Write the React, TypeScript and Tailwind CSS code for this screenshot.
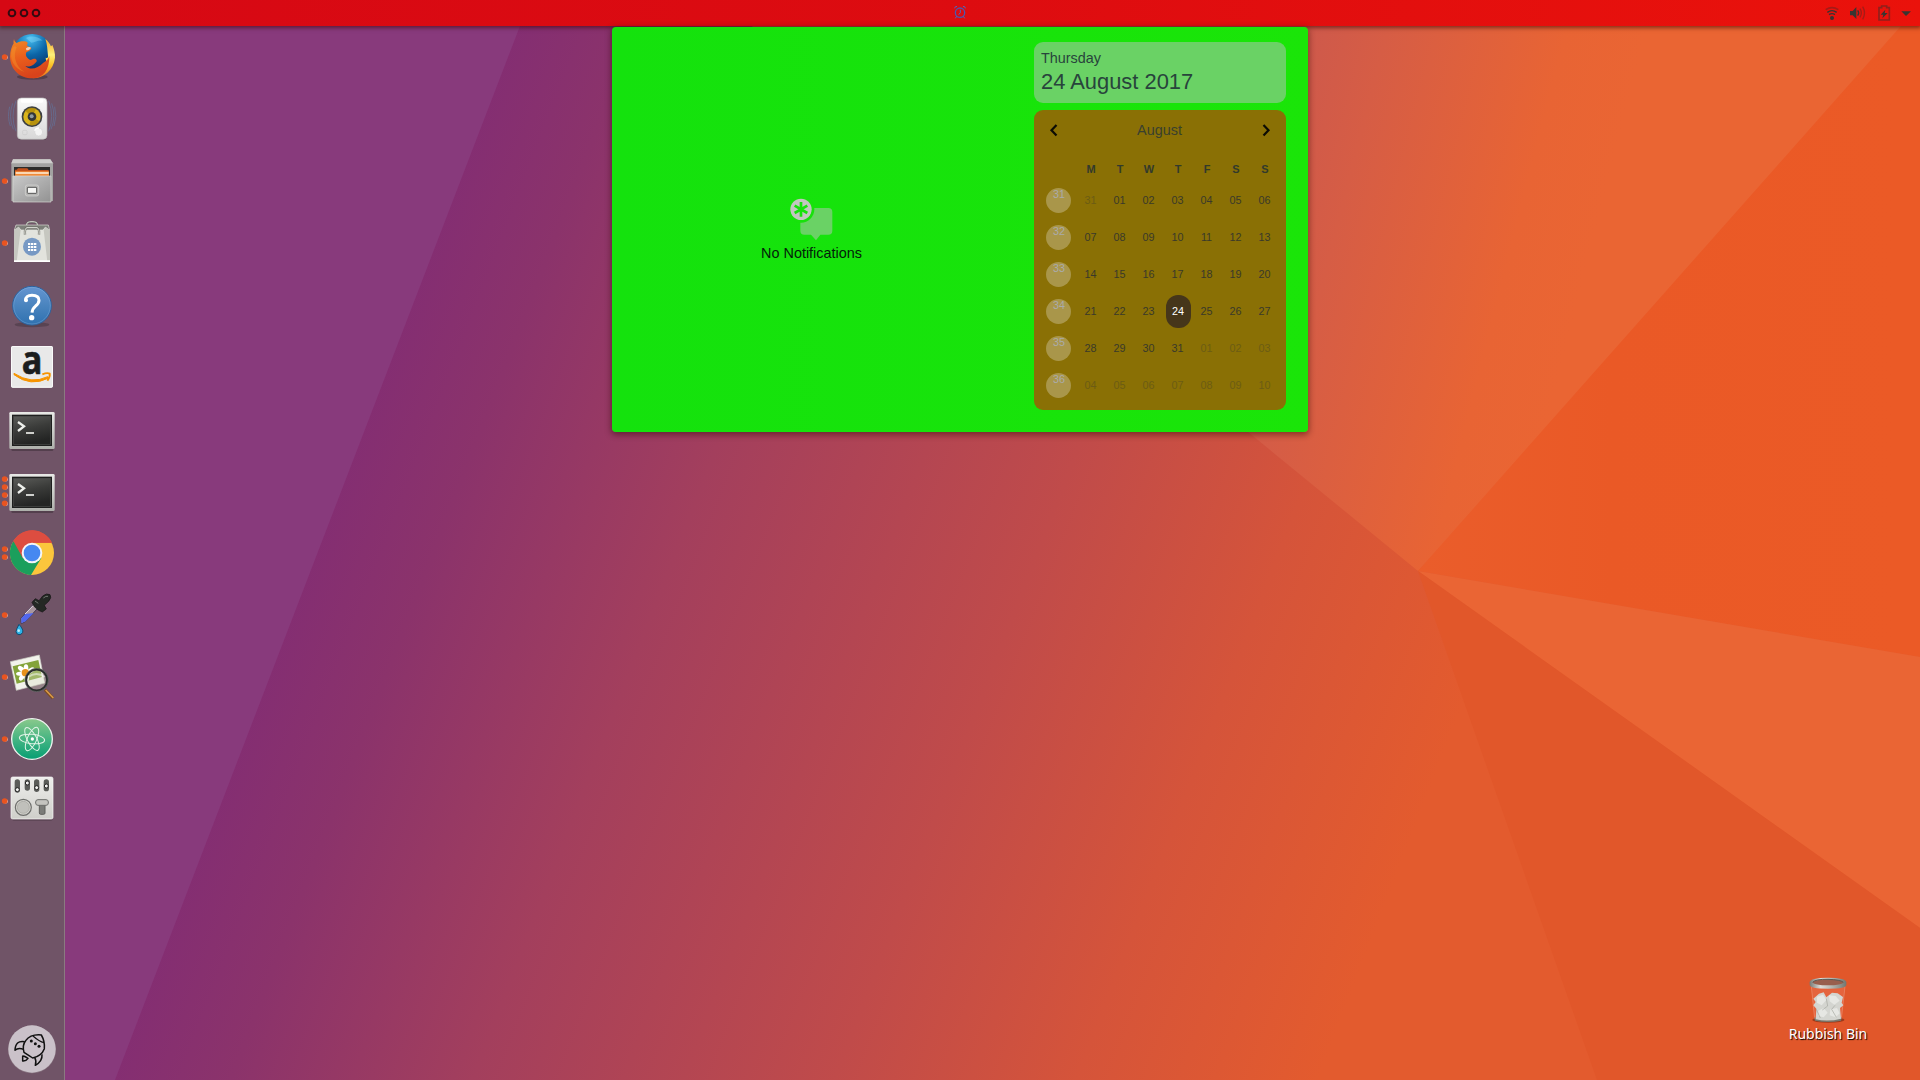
import React from "react";

function Wallpaper() {
  return (
    <svg className="absolute inset-0" width="1920" height="1080" viewBox="0 0 1920 1080">
      <defs>
        <linearGradient id="base" gradientUnits="userSpaceOnUse" x1="318" y1="540" x2="1370" y2="945">
          <stop offset="0" stopColor="#842e72" />
          <stop offset="0.1" stopColor="#8b336b" />
          <stop offset="0.3" stopColor="#a33f5d" />
          <stop offset="0.6" stopColor="#c04b4a" />
          <stop offset="0.8" stopColor="#d5543a" />
          <stop offset="1" stopColor="#e35b2e" />
        </linearGradient>
        <linearGradient id="top" gradientUnits="userSpaceOnUse" x1="1240" y1="60" x2="1615" y2="155">
          <stop offset="0" stopColor="#c85650" />
          <stop offset="0.35" stopColor="#d65d45" />
          <stop offset="0.8" stopColor="#e86434" />
          <stop offset="1" stopColor="#ea6533" />
        </linearGradient>
        <linearGradient id="right" gradientUnits="userSpaceOnUse" x1="1420" y1="400" x2="1900" y2="400">
          <stop offset="0" stopColor="#ea5d2b" />
          <stop offset="0.4" stopColor="#ea5926" />
          <stop offset="1" stopColor="#eb5a26" />
        </linearGradient>
      </defs>
      <rect width="1920" height="1080" fill="url(#base)" />
      <path d="M0 0H530L115 1080H0Z" fill="#883a7c" />
      <path d="M1418 571L720 0H1920V27Z" fill="url(#top)" />
      <path d="M1418 571L1900 27L1920 4V657Z" fill="url(#right)" />
      <path d="M1418 571L1920 657V928Z" fill="#ea6534" />
      <path d="M1418 571L1920 928V1080H1597Z" fill="#e1572a" />
    </svg>
  );
}

const icons: { top: number; dots: number[]; art: React.ReactNode }[] = [
  {
    top: 78,
    dots: [171],
    art: (
      <>
        <defs>
          <radialGradient id="globe" cx="0.45" cy="0.1" r="0.8">
            <stop offset="0" stopColor="#45bdf0" />
            <stop offset="0.5" stopColor="#0c66a8" />
            <stop offset="1" stopColor="#0a2c62" />
          </radialGradient>
          <linearGradient id="fox" x1="0" y1="0" x2="0.3" y2="1">
            <stop offset="0" stopColor="#f08a24" />
            <stop offset="0.5" stopColor="#ea5f1c" />
            <stop offset="1" stopColor="#d8431b" />
          </linearGradient>
          <linearGradient id="flame" x1="0" y1="0" x2="0" y2="1">
            <stop offset="0" stopColor="#f7a52a" />
            <stop offset="0.4" stopColor="#fdf07a" />
            <stop offset="0.65" stopColor="#fbc62a" />
            <stop offset="1" stopColor="#ea651c" />
          </linearGradient>
        </defs>
        <ellipse cx="97" cy="231" rx="46" ry="8" fill="#000" opacity="0.25" />
        <circle cx="97" cy="165" r="63" fill="url(#globe)" />
        <path d="M78 114c16-8 36-4 50 8-16-2-22 6-34 6z" fill="#8fdcf8" opacity="0.4" />
        <path d="M136 117c8 6 14 14 17 22l4-4c5 12 9 26 8 38-4 38-34 62-68 62 34-10 46-34 40-62 5 2 8 0 7-6-2-18-2-34-8-50z" fill="url(#flame)" />
        <path d="M42 117c1 7 4 9 8 12 8-5 18-6 30-4 4 3 4 6 0 10 4 6 10 6 14 8 0 6-6 10-14 13-6 8 0 20 12 24 10-5 16-6 18 1 2 4-4 8-10 13-8 6-18 6-24 4 16 14 36 8 54-10 14-8 16-14 18-20 1 40-18 67-51 67-38 0-66-27-67-65 0-16 5-30 11-40-1-4 0-8 1-13z" fill="url(#fox)" />
        <path d="M50 142c-12 26-4 58 24 74-32-8-48-40-38-68 4-8 8-12 14-6z" fill="#f79b2d" opacity="0.4" />
        <path d="M78 145c6-4 10-5 15-2-2 5-8 8-14 8z" fill="#f3d0b2" />
      </>
    ),
  },
  {
    top: 264,
    dots: [],
    art: (
      <>
        <defs>
          <linearGradient id="box" x1="0" y1="0" x2="0" y2="1">
            <stop offset="0" stopColor="#fafafa" />
            <stop offset="1" stopColor="#d8d8d8" />
          </linearGradient>
        </defs>
        <g fill="none" stroke="#5f7fae" strokeWidth="3" opacity="0.5">
          <path d="M48 302q-18 48 0 92M38 310q-14 40 2 78M29 320q-8 30 2 58" />
          <path d="M146 302q18 48 0 92M155 310q14 40-2 78M164 320q8 30-2 58" />
        </g>
        <rect x="55" y="408" width="84" height="12" rx="6" fill="#000" opacity="0.25" />
        <rect x="52" y="294" width="89" height="124" rx="12" fill="url(#box)" stroke="#b8b8b8" strokeWidth="2" />
        <rect x="62" y="296" width="68" height="12" rx="5" fill="#fff" />
        <circle cx="96" cy="350" r="31" fill="#3d4042" />
        <circle cx="96" cy="350" r="26" fill="#d9b41b" />
        <path d="M96 350L76 332A26 26 0 0 1 108 326ZM96 350L118 364A26 26 0 0 1 88 375Z" fill="#a88308" opacity="0.7" />
        <circle cx="96" cy="350" r="13" fill="#323638" />
        <circle cx="95" cy="349" r="6" fill="#8f9ba2" />
        <rect x="68" y="391" width="13" height="13" rx="3" fill="none" stroke="#cacaca" strokeWidth="2" />
        <circle cx="116" cy="396" r="12" fill="#f4f4f4" stroke="#d4d4d4" strokeWidth="2" />
        <path d="M104 392q4-9 13-8" fill="none" stroke="#fff" strokeWidth="4" />
      </>
    ),
  },
  {
    top: 450,
    dots: [543],
    art: (
      <>
        <defs>
          <linearGradient id="cab" x1="0" y1="0" x2="1" y2="1">
            <stop offset="0" stopColor="#c9c9c9" />
            <stop offset="1" stopColor="#929292" />
          </linearGradient>
        </defs>
        <path d="M39 478H151L159 490V603H34V490Z" fill="#a3a3a1" />
        <path d="M39 478H151L159 490H34Z" fill="#cfcfcd" />
        <path d="M42 501H150V532H42Z" fill="#2c2c2a" />
        <path d="M45 509H50L54 505H82L86 510H146V530H45Z" fill="#c2511c" />
        <path d="M46 514H147V530H46Z" fill="#f08a38" />
        <path d="M47 517H146V521H47Z" fill="#fff0dc" />
        <path d="M39 528H153V606H39Z" fill="url(#cab)" stroke="#d9d9d7" strokeWidth="2" />
        <rect x="76" y="555" width="40" height="33" rx="6" fill="#b7b7b5" stroke="#d7d7d5" strokeWidth="2" />
        <rect x="82" y="562" width="28" height="18" rx="2" fill="#f6f6f4" stroke="#555" strokeWidth="3" />
      </>
    ),
  },
  {
    top: 636,
    dots: [729],
    art: (
      <>
        <path d="M80 682v-8q0-9 16-9t16 9v8" fill="none" stroke="#6a6a66" strokeWidth="6" />
        <path d="M80 680v-7q0-8 16-8t16 8v7" fill="none" stroke="#d9dad4" strokeWidth="3" />
        <path d="M48 675H145L149 690H43Z" fill="#7d7f79" stroke="#dcddd7" strokeWidth="2" />
        <path d="M43 690L56 680 64 690H128L136 680 149 690 150 785H42Z" fill="#e2e3dd" />
        <path d="M43 690L56 680 62 690 50 785H42ZM149 690L136 680 131 690 142 785H150Z" fill="#c6c7c0" />
        <path d="M42 781H150V786H42Z" fill="#fff" />
        <path d="M75 704q-2-19 6-21h30q8 2 6 21" fill="none" stroke="#6f7068" strokeWidth="7" />
        <path d="M75 704q-2-19 6-21h30q8 2 6 21" fill="none" stroke="#e4e5df" strokeWidth="3" />
        <circle cx="96" cy="740" r="27" fill="#7799c4" />
        <path d="M84 729h7v6h-7zM93 729h7v6h-7zM102 729h7v6h-7zM84 738h7v6h-7zM93 738h7v6h-7zM102 738h7v6h-7zM84 747h7v6h-7zM93 747h7v6h-7zM102 747h7v6h-7z" fill="#fff" />
      </>
    ),
  },
  {
    top: 12,
    dots: [],
    art: (
      <>
        <defs>
          <linearGradient id="help" x1="0" y1="0" x2="0" y2="1">
            <stop offset="0" stopColor="#6495d2" />
            <stop offset="0.5" stopColor="#4a84be" />
            <stop offset="1" stopColor="#2f71b0" />
          </linearGradient>
        </defs>
        <ellipse cx="96" cy="164" rx="52" ry="8" fill="#000" opacity="0.2" />
        <circle cx="96" cy="107" r="58" fill="url(#help)" stroke="#2b63a0" strokeWidth="3" />
        <circle cx="96" cy="107" r="55" fill="none" stroke="#8fb6df" strokeWidth="1.500" opacity="0.7" />
        <path d="M77 91Q76 76 96 76Q117 76 117 91Q117 101 106 109Q97 116 96 128" fill="none" stroke="#fff" strokeWidth="9" />
        <circle cx="78" cy="91" r="6" fill="#fff" />
        <circle cx="95" cy="143" r="8" fill="#fff" />
      </>
    ),
  },
  {
    top: 198,
    dots: [],
    art: (
      <>
        <rect x="33" y="228" width="126" height="125" rx="5" fill="#e9e9e9" />
        <rect x="34.500" y="229.500" width="123" height="122" rx="4" fill="none" stroke="#fafafa" strokeWidth="3" />
        <text x="96" y="312" textAnchor="middle" className="font-['Open_Sans'] font-bold" fontSize="116" textLength="62" lengthAdjust="spacingAndGlyphs" fill="#1b1d1e" stroke="#1b1d1e" strokeWidth="2">a</text>
        <path d="M42 310Q94 344 143 320L146 324Q92 352 42 314Z" fill="#f79400" stroke="#f79400" strokeWidth="3" />
        <path d="M127 313Q142 307 149 311Q151 319 142 332" fill="none" stroke="#f79400" strokeWidth="6" />
      </>
    ),
  },
  { top: 384, dots: [], art: <Terminal dy={0} /> },
  { top: 570, dots: [627, 651, 675, 700], art: <Terminal dy={186} /> },
  {
    top: -9,
    dots: [72, 96],
    art: (
      <>
        <circle cx="96" cy="84" r="66" fill="#fbc63c" />
        <path d="M96 84L96 53L156 53A66 66 0 0 0 37 54L69 99Z" fill="#dd4d40" />
        <path d="M37 54A66 66 0 0 0 93 150L124 99L96 84L69 99L42 47Z" fill="#1b9f5c" />
        <path d="M40 48L68 98L96 84V53H156A66 66 0 0 0 40 48Z" fill="#dd4d40" />
        <circle cx="96" cy="84" r="31" fill="#f4f6f8" />
        <circle cx="96" cy="84" r="25" fill="#4688f1" />
      </>
    ),
  },
  {
    top: 177,
    dots: [270],
    art: (
      <>
        <path d="M62 281L100 238L113 250L76 290L64 296Z" fill="#a9969f" stroke="#453b53" strokeWidth="3" />
        <path d="M64 280L76 267L101 264L77 289L64 295Z" fill="#5267ee" />
        <path d="M75 267L99 242" stroke="#e9dce6" strokeWidth="3" />
        <path d="M96 232L106 221L117 227L128 213Q140 203 150 209Q156 217 146 229L133 241L139 252L127 261Q105 254 96 232Z" fill="#242824" stroke="#111" strokeWidth="2" />
        <path d="M130 219q8-7 14-5M105 228l10 7" stroke="#71766f" strokeWidth="3" fill="none" />
        <path d="M57 298Q71 314 68 322Q64 330 57 329Q49 328 48 320Q49 312 57 298Z" fill="#2fb3e8" stroke="#124d72" strokeWidth="3" />
        <circle cx="56" cy="317" r="4" fill="#bdeefb" />
      </>
    ),
  },
  {
    top: 363,
    dots: [456],
    art: (
      <>
        <path d="M31 410L118 390L134 474L49 496Z" fill="#f2f3ec" stroke="#cccfc4" strokeWidth="2" />
        <path d="M38 424L115 405L126 456L50 476Z" fill="#83a33a" />
        <g fill="#fff">
          <ellipse cx="78" cy="430" rx="7" ry="12" />
          <ellipse cx="93" cy="436" rx="7" ry="12" transform="rotate(55 93 436)" />
          <ellipse cx="64" cy="432" rx="7" ry="12" transform="rotate(-50 64 432)" />
          <ellipse cx="60" cy="446" rx="6" ry="12" transform="rotate(85 60 446)" />
          <ellipse cx="66" cy="456" rx="7" ry="12" transform="rotate(35 66 456)" />
          <ellipse cx="80" cy="459" rx="7" ry="12" />
        </g>
        <circle cx="76" cy="443" r="11" fill="#e8921b" />
        <circle cx="110" cy="465" r="32" fill="#d9ddc5" fillOpacity="0.35" stroke="#292c2b" strokeWidth="7" />
        <path d="M84 456q26-18 50 0" stroke="#fff" strokeWidth="6" fill="none" opacity="0.5" />
        <circle cx="110" cy="465" r="35" fill="none" stroke="#7b807d" strokeWidth="1.500" />
        <path d="M135 494L159 520" stroke="#7a4a1c" strokeWidth="9" />
        <path d="M137 495L160 519" stroke="#d89a4a" strokeWidth="5" />
      </>
    ),
  },
  {
    top: 549,
    dots: [642],
    art: (
      <>
        <defs>
          <linearGradient id="atom" x1="0" y1="0" x2="0" y2="1">
            <stop offset="0" stopColor="#8bc98b" />
            <stop offset="0.55" stopColor="#3fb382" />
            <stop offset="1" stopColor="#079e72" />
          </linearGradient>
        </defs>
        <circle cx="96" cy="642" r="61" fill="url(#atom)" stroke="#eef3ef" strokeWidth="4" />
        <g fill="none" stroke="#e3f4e8" strokeWidth="3">
          <ellipse cx="96" cy="642" rx="38" ry="14" transform="rotate(6 96 642)" />
          <ellipse cx="96" cy="642" rx="38" ry="14" transform="rotate(62 96 642)" />
          <ellipse cx="96" cy="642" rx="38" ry="14" transform="rotate(-66 96 642)" />
        </g>
        <circle cx="97" cy="642" r="5" fill="#fff" />
      </>
    ),
  },
  {
    top: 735,
    dots: [828],
    art: (
      <>
        <defs>
          <linearGradient id="mix" x1="0" y1="0" x2="0" y2="1">
            <stop offset="0" stopColor="#eeeeec" />
            <stop offset="1" stopColor="#cfcfca" />
          </linearGradient>
        </defs>
        <rect x="36" y="872" width="122" height="15" rx="5" fill="#000" opacity="0.2" />
        <rect x="33" y="756" width="126" height="126" rx="5" fill="url(#mix)" stroke="#fbfbfa" strokeWidth="2" />
        <g fill="#5b5c59">
          <rect x="44" y="763" width="16" height="40" rx="8" />
          <rect x="74" y="763" width="16" height="34" rx="8" />
          <rect x="102" y="763" width="16" height="38" rx="8" />
          <rect x="131" y="763" width="16" height="36" rx="8" />
        </g>
        <g fill="#f2f2f0" stroke="#222" strokeWidth="3">
          <circle cx="52" cy="794" r="6" />
          <circle cx="82" cy="774" r="6" />
          <circle cx="110" cy="788" r="6" />
          <circle cx="139" cy="783" r="6" />
        </g>
        <circle cx="70" cy="847" r="24" fill="#d2d2cd" stroke="#6d6e6b" strokeWidth="3.500" />
        <circle cx="70" cy="847" r="18" fill="#c0c0bb" stroke="#a4a49f" strokeWidth="2" />
        <rect x="118" y="830" width="17" height="38" rx="4" fill="#7b7c78" stroke="#5f605d" strokeWidth="3" />
        <rect x="107" y="824" width="38" height="17" rx="7" fill="#c4c4bf" stroke="#6d6e6b" strokeWidth="3" />
      </>
    ),
  },
];

function Terminal({ dy }: { dy: number }) {
  return (
    <g transform={`translate(0 ${dy})`}>
      <defs>
        <linearGradient id={`tb${dy}`} x1="0" y1="0" x2="0" y2="1">
          <stop offset="0" stopColor="#e8e9e6" />
          <stop offset="1" stopColor="#aeb0ab" />
        </linearGradient>
        <linearGradient id={`ts${dy}`} x1="0" y1="0" x2="0.3" y2="1">
          <stop offset="0" stopColor="#5a5b58" />
          <stop offset="0.5" stopColor="#3b3c3a" />
          <stop offset="1" stopColor="#242524" />
        </linearGradient>
      </defs>
      <rect x="34" y="534" width="126" height="9" rx="4" fill="#000" opacity="0.25" />
      <rect x="28" y="426" width="136" height="111" rx="4" fill={`url(#tb${dy})`} />
      <rect x="36" y="434" width="120" height="94" fill="#1e1f1e" />
      <rect x="41" y="439" width="110" height="84" fill={`url(#ts${dy})`} stroke="#4c4d4b" strokeWidth="2" />
      <path d="M54 456L72 469L54 483" fill="none" stroke="#eef0ec" strokeWidth="7" />
      <path d="M78 489H102" stroke="#eef0ec" strokeWidth="5" />
    </g>
  );
}

function Launcher() {
  return (
    <aside className="flex h-full w-[65px] flex-col border-r border-[#8a7b80] bg-[#705467]">
      {icons.map((icon, i) => (
        <svg key={i} className="shrink-0 overflow-visible" width="64" height="62" viewBox={`0 ${icon.top} 192 186`}>
          {icon.dots.map((y) => (
            <g key={y}>
              <circle cx="17" cy={y + 1} r="6.500" fill="#e9d2cf" />
              <circle cx="14" cy={y} r="8.500" fill="#e95420" />
            </g>
          ))}
          {icon.art}
        </svg>
      ))}
      <svg className="mt-auto shrink-0" width="64" height="60" viewBox="0 120 192 180">
        <circle cx="96" cy="208" r="72" fill="#8b7884" />
        <circle cx="96" cy="207" r="71" fill="#cac1c9" />
        <g fill="none" stroke="#111" strokeWidth="4.500" strokeLinejoin="round">
          <path d="M72 217Q66 195 77 182Q92 162 124 165Q135 184 133 206Q125 228 98 234Q86 226 72 217Z" />
          <path d="M99 168Q118 185 132 188" strokeWidth="3.500" />
          <path d="M74 185Q46 180 45 211Q54 202 71 208" />
          <path d="M126 223Q128 243 106 256Q110 242 104 232" />
          <path d="M68 228Q69 226 84 235Q78 244 68 243Z" />
        </g>
        <g fill="#111">
          <circle cx="94" cy="183" r="4.500" />
          <circle cx="106" cy="191" r="4.500" />
          <circle cx="117" cy="199" r="4.500" />
        </g>
      </svg>
    </aside>
  );
}

function TopBar() {
  return (
    <header className="relative z-20 flex h-[26px] shrink-0 items-center justify-between bg-linear-to-r from-[#d60814] via-[#dd0c10] to-[#ea120b] pr-[7px] shadow-[0_1px_4px_1px_rgba(60,0,0,0.55)]">
      <svg width="48" height="26" viewBox="0 0 144 78" fill="none" stroke="#350a10" strokeWidth="6">
        <circle cx="36" cy="39" r="10" />
        <circle cx="72" cy="39" r="10" />
        <circle cx="108" cy="39" r="10" />
      </svg>
      <svg className="absolute left-[952px] top-[4px]" width="16" height="17" viewBox="0 0 48 51" fill="none" stroke="#4a6cc0" strokeWidth="3">
        <circle cx="24" cy="26" r="14" stroke="#4a58b0" strokeWidth="4" />
        <path d="M25 17V26L20 32M14 37L10 43M34 37L38 43M8 13Q8 7 15 7M40 13Q40 7 33 7" />
      </svg>
      <svg width="96" height="26" viewBox="111 0 288 78">
        <g fill="none" strokeWidth="5">
          <path d="M137 29Q156 17 175 29" stroke="#a51b17" />
          <path d="M142 37Q156 27 170 37M147 44Q156 38 165 44" stroke="#383532" strokeWidth="4" />
        </g>
        <circle cx="156" cy="54" r="6" fill="#383532" />
        <path d="M210 33H218L229 21V57L218 46H210Z" fill="#383532" />
        <path d="M233 31Q239 39 233 47" fill="none" stroke="#383532" strokeWidth="4" />
        <path d="M240 26Q248 39 240 52M248 20Q259 39 248 58" fill="none" stroke="#a51c17" strokeWidth="4" />
        <path d="M297 23H305V18H320V23H328V60H297Z" fill="none" stroke="#8f211c" strokeWidth="5" />
        <path d="M316 29L302 44H310L307 55L323 39H314Z" fill="#383532" />
        <path d="M364 34H393L378 48Z" fill="#383532" />
      </svg>
    </header>
  );
}

const weeks = [
  ["31", "31", "01", "02", "03", "04", "05", "06"],
  ["32", "07", "08", "09", "10", "11", "12", "13"],
  ["33", "14", "15", "16", "17", "18", "19", "20"],
  ["34", "21", "22", "23", "24", "25", "26", "27"],
  ["35", "28", "29", "30", "31", "01", "02", "03"],
  ["36", "04", "05", "06", "07", "08", "09", "10"],
];

function dayClass(row: number, col: number) {
  if (row === 3 && col === 4) return "ml-[2px] h-[33px] w-[25px] rounded-[12px] bg-[#46361a] pr-px text-white";
  if ((row === 0 && col === 1) || (row === 4 && col > 4) || row === 5) return "h-[33px] w-[25px] text-[#6c5c14]";
  return "h-[33px] w-[25px] text-[#39392a]";
}

function Calendar() {
  return (
    <section className="mt-[7px] h-[300px] rounded-[9px] bg-[#8a7005] pl-[10px] pr-[6px]">
      <div className="flex h-[40px] items-center justify-between pl-[5px] pr-[9px]">
        <svg width="9" height="14" viewBox="0 0 9 14" fill="none" stroke="#0c0c04" strokeWidth="2.200">
          <path d="M7.500 2L2.500 7.200L7.500 12.500" />
        </svg>
        <span className="-ml-px pt-[2px] text-[14.4px] text-[#39402e]">August</span>
        <svg width="9" height="14" viewBox="0 0 9 14" fill="none" stroke="#0c0c04" strokeWidth="2.200">
          <path d="M1.500 2L6.500 7.200L1.500 12.500" />
        </svg>
      </div>
      <div className="grid h-[38px] grid-cols-[32px_repeat(7,29px)] items-center pt-px">
        <span />
        {["M", "T", "W", "T", "F", "S", "S"].map((d, i) => (
          <span key={i} className="pl-px text-center text-[11px] font-bold text-[#323a2c]">{d}</span>
        ))}
      </div>
      <div className="-mt-[6px] text-[10.8px]">
        {weeks.map((week, r) => (
          <div key={r} className="grid h-[37px] grid-cols-[32px_repeat(7,29px)] items-center">
            {week.map((d, c) =>
              c === 0 ? (
                <span key={c} className="ml-[2px] flex h-[25px] w-[25px] justify-center rounded-full bg-[#a9964a] pl-px leading-[13px] text-[#a9abab]">{d}</span>
              ) : (
                <span key={c} className="flex items-center justify-center">
                  <span className={`flex items-center justify-center ${dayClass(r, c)}`}>{d}</span>
                </span>
              ),
            )}
          </div>
        ))}
      </div>
    </section>
  );
}

function NotificationPopover() {
  return (
    <div className="absolute left-[612px] top-[27px] z-30 flex h-[405px] w-[696px] rounded-[4px] bg-linear-to-r from-[#14e20d] to-[#1ae508] font-['Liberation_Sans',sans-serif] shadow-[0_2px_6px_1px_rgba(40,0,0,0.45)]">
      <div className="flex w-[399px] flex-col items-center pt-[170px]">
        <svg width="44" height="44" viewBox="0 0 132 132">
          <path d="M43 33H115Q127 33 127 45V101Q127 113 115 113H91L78 130L63 113H43Q31 113 31 101V45Q31 33 43 33Z" fill="#6ad265" />
          <circle cx="33" cy="37" r="40" fill="#17e20b" />
          <circle cx="33" cy="37" r="32" fill="#c3c6c0" />
          <path d="M33 15V59M14 26L52 48M52 26L14 48" stroke="#17e20b" strokeWidth="8" />
        </svg>
        <span className="mt-[3px] text-[14.4px] leading-[18px] text-[#04200a]">No Notifications</span>
      </div>
      <div className="ml-[23px] w-[252px] pt-[15px]">
        <section className="h-[61px] rounded-[9px] bg-[#6ad265] pl-[7px] pt-[7px] text-[#28443c]">
          <div className="text-[14.4px] leading-[18px]">Thursday</div>
          <div className="pt-px text-[21.9px] leading-[28px]">24 August 2017</div>
        </section>
        <Calendar />
      </div>
    </div>
  );
}

function RubbishBin() {
  return (
    <div className="absolute left-[1768px] top-[974px] flex w-[120px] flex-col items-center">
      <svg width="44" height="50" viewBox="197 102 132 150">
        <defs>
          <linearGradient id="rim" x1="0" y1="0" x2="1" y2="0">
            <stop offset="0" stopColor="#777a75" />
            <stop offset="0.3" stopColor="#deded9" />
            <stop offset="0.6" stopColor="#b4b6b0" />
            <stop offset="1" stopColor="#73766f" />
          </linearGradient>
        </defs>
        <ellipse cx="264" cy="240" rx="48" ry="8" fill="#64220f" opacity="0.55" />
        <path d="M212 135H315L304 236Q264 252 222 236Z" fill="#f0856a" fillOpacity="0.3" />
        <path d="M213 140L223 236M314 140L303 236" stroke="#f3b6a2" strokeWidth="1.500" opacity="0.7" />
        <path d="M222 232Q264 250 304 232L302 242Q264 250 224 242Z" fill="#77786f" />
        <path d="M219 176L236 161L250 157L258 172L275 158L292 160L308 171L304 188L309 196L299 204L302 236Q264 246 226 238L228 206L219 196L226 186Z" fill="#d4d5d0" />
        <path d="M230 170l18-6 10 16-14 16-14-8zM266 166l20 2 12 14-16 12-14-10zM234 212l16-8 12 14-12 14-16-4zM270 208l20-4 8 16-12 12-18-6z" fill="#e6e7e3" />
        <path d="M258 176l4 22-16 12M284 196l-10 12 14 24M228 208l12 26" stroke="#a4a69f" strokeWidth="2" fill="none" />
        <path d="M208 127Q208 113 263 113T318 127V135Q318 146 263 146T208 135Z" fill="url(#rim)" />
        <ellipse cx="263" cy="127" rx="46" ry="9" fill="#985f4d" />
        <path d="M217 127Q225 117 263 118T309 127" fill="none" stroke="#585b55" strokeWidth="3" />
      </svg>
      <span className="whitespace-nowrap font-['Noto_Sans',sans-serif] text-[14px] leading-[20px] text-white [text-shadow:1px_1px_1px_#000]">Rubbish Bin</span>
    </div>
  );
}

export default function App() {
  return (
    <div className="relative flex h-[1080px] w-[1920px] flex-col overflow-hidden">
      <Wallpaper />
      <TopBar />
      <main className="relative z-10 min-h-0 flex-1">
        <Launcher />
      </main>
      <NotificationPopover />
      <RubbishBin />
    </div>
  );
}
